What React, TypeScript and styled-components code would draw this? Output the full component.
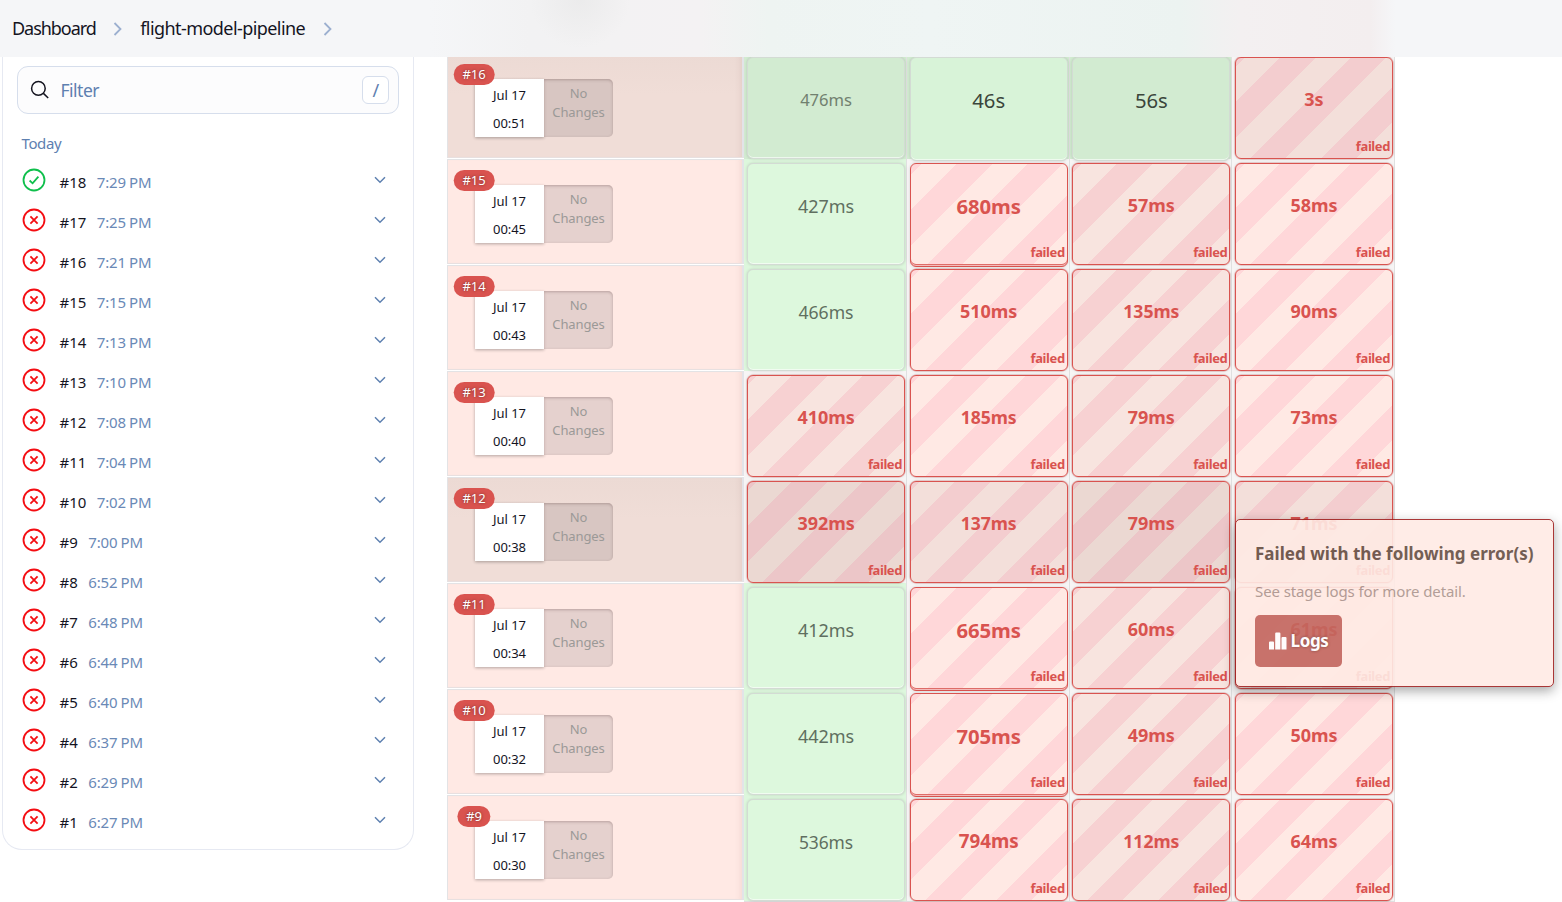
import React from 'react';
import styled, { createGlobalStyle, css } from 'styled-components';

const GlobalStyle = createGlobalStyle`
  * { box-sizing: border-box; }
  body { margin: 0; background: #fff; font-family: "Noto Sans", sans-serif; color: #14141f; overflow: hidden; }
`;

const Page = styled.div`
  height: 902px;
  width: 1562px;
  overflow: hidden;
  display: flex;
  flex-direction: column;
`;

const Header = styled.header`
  flex: none;
  height: 57px;
  display: flex;
  align-items: center;
  padding: 0 0 2px 12px;
  background:
    radial-gradient(ellipse 50px 48px at 580px 0, rgba(228, 228, 228, 0.5), rgba(238, 238, 238, 0)),
    linear-gradient(90deg, #f5f6f8 0, #f5f6f8 430px, #f2f2f3 530px, #f4f2f3 700px, #eef4f2 770px, #eff5f4 930px, #ecf3f1 1180px, #f3f0f1 1240px, #f3eeef 1370px, #f5f6f8 1395px);
`;

const Crumb = styled.span<{ $spacing: number }>`
  font-size: 18px;
  line-height: 24px;
  letter-spacing: ${p => p.$spacing}px;
  white-space: nowrap;
`;

const Separator = styled.svg`
  width: 10px;
  height: 16px;
  margin: 2px 17px 0 17.5px;
  fill: none;
  stroke: #9cb0d0;
  stroke-width: 1.8;
`;

const Content = styled.main`
  flex: 1;
  min-height: 0;
  overflow: hidden;
  display: flex;
  align-items: flex-start;
`;

const Sidebar = styled.aside`
  width: 412px;
  height: 793px;
  margin-left: 2px;
  padding: 9px 14px 0;
  border: 1px solid #e6e9f2;
  border-top: 0;
  border-radius: 0 0 20px 20px;
`;

const Search = styled.div`
  display: flex;
  align-items: center;
  height: 48px;
  padding: 0 9px 0 12px;
  border: 1px solid #d6deec;
  border-radius: 11px;
  background: #fcfcfd;
  color: #5e80b0;
  font-size: 17.5px;
  letter-spacing: -0.5px;
`;

const SearchIcon = styled.svg`
  width: 20px;
  height: 20px;
  margin-right: 10.5px;
  fill: none;
  stroke: #14141f;
  stroke-width: 1.5;
`;

const KeyHint = styled.span`
  display: flex;
  align-items: center;
  justify-content: center;
  width: 27px;
  height: 28px;
  margin-left: auto;
  border: 1px solid #d6deec;
  border-radius: 6px;
  background: #fff;
  font-size: 18px;
`;

const GroupTitle = styled.h2`
  margin: 17px 0 7px 4.5px;
  font-size: 15px;
  line-height: 24px;
  font-weight: 400;
  letter-spacing: -0.4px;
  color: #5e80b0;
`;

const RunRow = styled.div`
  display: flex;
  align-items: center;
  height: 40px;
  padding: 0 11px 0 5px;
  font-size: 15px;
  letter-spacing: -0.08px;
`;

const StatusIcon = styled.svg<{ $ok?: boolean }>`
  width: 24px;
  height: 24px;
  margin: -5px 13.5px 0 0;
  fill: none;
  stroke: ${p => (p.$ok ? '#0fbf4c' : '#f40d12')};
  stroke-width: 1.8;
`;

const RunTime = styled.span`
  margin-left: 10.5px;
  word-spacing: -1px;
  color: #6a89b6;
`;

const RowChevron = styled.svg`
  width: 12px;
  height: 8px;
  margin: -4px 2px 0 auto;
  fill: none;
  stroke: #5e80b0;
  stroke-width: 1.5;
`;

const Board = styled.section`
  position: relative;
  width: 948px;
  margin: -4px 0 0 33px;
`;

const BoardRow = styled.div`
  display: grid;
  grid-template-columns: 297.4px repeat(4, 162.66px);
  height: 106px;
`;

const BuildCell = styled.div<{ $dark?: boolean }>`
  height: 105px;
  padding: 21px 0 0 7px;
  border: 1px solid #e3e3e5;
  border-bottom-color: #e8e0e0;
  border-right: 2px solid #e3e3e8;
  background: ${p => (p.$dark ? 'linear-gradient(#ecdad4, #f0ddd7 40%)' : '#ffe9e4')};
  box-shadow: inset -6px 0 6px -5px rgba(120, 60, 50, 0.1);
`;

const Badge = styled.span`
  position: absolute;
  left: 27px;
  transform: translateX(-50%);
  margin-top: -11px;
  height: 21px;
  padding: 0 8.8px;
  border-radius: 11px;
  background: #d9534f;
  color: #fff;
  font-size: 13px;
  line-height: 21px;
  letter-spacing: -0.1px;
  text-shadow: 0 0 3px rgba(0, 0, 0, 0.5);
`;

const BuildInfo = styled.div`
  display: flex;
  margin: 4px 0 0 20px;
`;

const DateBox = styled.div`
  width: 69px;
  height: 58px;
  padding-top: 2px;
  background: #fff;
  text-align: center;
  font-size: 13px;
  line-height: 28px;
  letter-spacing: -0.05px;
  box-shadow: 0 1px 3px rgba(0, 0, 0, 0.3);
`;

const ChangesBox = styled.div<{ $dark?: boolean }>`
  width: 69px;
  height: 58px;
  padding-top: 5px;
  border-radius: 0 5px 5px 0;
  background: ${p => (p.$dark ? '#d8c6c2' : '#e5d1ce')};
  color: #9b9997;
  text-align: center;
  font-size: 13px;
  line-height: 19px;
  letter-spacing: -0.1px;
  box-shadow: inset 0 1px 3px rgba(80, 50, 50, 0.3);
`;

const StageCell = styled.div<{ $green?: boolean; $dark?: boolean }>`
  padding: 4px 1px 0 2.6px;
  border-right: 1px solid #e0e0e0;
  border-bottom: 1px solid #e0e0e0;
  background: ${p => (p.$green ? (p.$dark ? '#d2ebd1' : '#ddf7dd') : '#f7f5f5')};
`;

const stripes = (base: string, stripe: string) => css`
  background: repeating-linear-gradient(-45deg, ${base} 0, ${base} 25px, ${stripe} 25px, ${stripe} 50px);
`;

const tones = [
  stripes('#ffe9e4', '#ffd7d9'),
  stripes('#f8e4df', '#f7d1d2'),
  stripes('#f3dfda', '#f3cdcf'),
  stripes('#ebd8d2', '#ecc6c8'),
];
const greens = ['#ddf8dd', '#d8f3d8', '#d2ebd1'];

const Stage = styled.div<{ $fail?: boolean; $tone: number; $size: number; $tall?: boolean; $ink?: string }>`
  position: relative;
  height: ${p => (p.$tall ? 104 : 102)}px;
  padding-top: ${p => (p.$tall || (!p.$fail && p.$size > 17) ? 28 : 27)}px;
  border: 1px solid ${p => (p.$fail ? '#d9534f' : '#d3dbd4')};
  border-radius: 6px;
  text-align: center;
  line-height: 29px;
  font-size: ${p => p.$size}px;
  letter-spacing: -0.05px;
  font-weight: ${p => (p.$fail ? 700 : 400)};
  color: ${p => (p.$fail ? '#d9534f' : p.$ink)};
  ${p => (p.$fail ? tones[p.$tone] : css`background: ${greens[p.$tone]};`)}
  box-shadow: 0 0 3px rgba(0, 0, 0, 0.15)
    ${p => (!p.$fail ? ', inset 0 -1px 0 rgba(255, 255, 255, 0.6)' : p.$tall ? ', inset 0 -1px 0 #f4bcbb, inset 0 -2px 0 #de6c68' : ', 0 0 0 0.5px rgba(217, 83, 79, 0.4)')};
`;

const FailedLabel = styled.span<{ $tall?: boolean }>`
  position: absolute;
  right: 2px;
  bottom: ${p => (p.$tall ? 5 : 3)}px;
  font-size: 13px;
  line-height: 18px;
  letter-spacing: -0.4px;
`;

const Popover = styled.div`
  position: absolute;
  left: 788px;
  top: 466px;
  width: 319px;
  height: 168px;
  padding: 22px 19px;
  border: 1px solid #a02222;
  border-radius: 5px;
  background: #ffebe5;
  opacity: 0.9;
  box-shadow: 0 4px 12px rgba(0, 0, 0, 0.38);
`;

const PopTitle = styled.h3`
  margin: 0;
  font-size: 17px;
  line-height: 24px;
  letter-spacing: 0.04px;
  color: #664e43;
  white-space: nowrap;
`;

const PopText = styled.p`
  margin: 14px 0 13px;
  font-size: 15px;
  line-height: 22px;
  letter-spacing: -0.1px;
  color: #ab948d;
`;

const LogsButton = styled.button`
  display: flex;
  align-items: center;
  justify-content: center;
  gap: 4px;
  width: 87px;
  height: 52px;
  padding: 0 0 1px;
  border: 0;
  border-radius: 5px;
  background: #c3665e;
  color: #fff;
  font: 700 17px "Noto Sans", sans-serif;
  letter-spacing: -0.4px;
  text-shadow: 0 0 3px rgba(0, 0, 0, 0.45);
`;

const runs: [number, string][] = [
  [18, '7:29'], [17, '7:25'], [16, '7:21'], [15, '7:15'], [14, '7:13'], [13, '7:10'], [12, '7:08'], [11, '7:04'], [10, '7:02'],
  [9, '7:00'], [8, '6:52'], [7, '6:48'], [6, '6:44'], [5, '6:40'], [4, '6:37'], [2, '6:29'], [1, '6:27'],
];

interface StageData { t: string; fail?: boolean; tone: number; size: number; tall?: boolean; ink?: string }
const g = (t: string, tone = 0, size = 18, ink = '#5f6f60', tall = false): StageData => ({ t, tone, size, ink, tall });
const f = (t: string, tone = 0, size = 18, tall = false): StageData => ({ t, fail: true, tone, size, tall });

const builds: { n: number; time: string; dark?: boolean; stages: StageData[] }[] = [
  { n: 16, time: '00:51', dark: true, stages: [g('476ms', 2, 16.6, '#71806f'), g('46s', 1, 20.3, '#3b453b', true), g('56s', 2, 20.3, '#3b453b', true), f('3s', 2)] },
  { n: 15, time: '00:45', stages: [g('427ms'), f('680ms', 0, 20.3, true), f('57ms', 1), f('58ms')] },
  { n: 14, time: '00:43', stages: [g('466ms', 0, 17.6), f('510ms'), f('135ms', 1, 17.6), f('90ms')] },
  { n: 13, time: '00:40', stages: [f('410ms', 1), f('185ms', 0, 17.6), f('79ms', 1), f('73ms')] },
  { n: 12, time: '00:38', dark: true, stages: [f('392ms', 3), f('137ms', 2, 17.6), f('79ms', 3), f('71ms', 2)] },
  { n: 11, time: '00:34', stages: [g('412ms'), f('665ms', 0, 20.3, true), f('60ms', 1), f('61ms')] },
  { n: 10, time: '00:32', stages: [g('442ms'), f('705ms', 0, 20.3, true), f('49ms', 1), f('50ms')] },
  { n: 9, time: '00:30', stages: [g('536ms', 0, 17.4), f('794ms', 0, 18.8), f('112ms', 1, 17.6), f('64ms')] },
];

const Chevron = () => (
  <Separator viewBox="0 0 10 16"><path d="M1.5 2 L7.5 8 L1.5 14" /></Separator>
);

export default function App() {
  return (
    <Page>
      <GlobalStyle />
      <Header>
        <Crumb $spacing={-1.05}>Dashboard</Crumb>
        <Chevron />
        <Crumb $spacing={-0.57}>flight-model-pipeline</Crumb>
        <Chevron />
      </Header>
      <Content>
        <Sidebar>
          <Search>
            <SearchIcon viewBox="0 0 20 20"><circle cx="8.4" cy="8.4" r="6.8" /><path d="M13.4 13.4 L18.2 18" /></SearchIcon>
            Filter
            <KeyHint>/</KeyHint>
          </Search>
          <GroupTitle>Today</GroupTitle>
          {runs.map(([n, time]) => (
            <RunRow key={n}>
              <StatusIcon $ok={n === 18} viewBox="0 0 24 24">
                <circle cx="12" cy="12" r="10.5" />
                <path d={n === 18 ? 'M7.6 12.5 L10.6 15.3 L16.4 8.6' : 'M8.4 8.4 L15.6 15.6 M15.6 8.4 L8.4 15.6'} />
              </StatusIcon>
              <span>#{n}</span>
              <RunTime>{time} PM</RunTime>
              <RowChevron viewBox="0 0 12 8"><path d="M1 1.2 L6 6.2 L11 1.2" /></RowChevron>
            </RunRow>
          ))}
        </Sidebar>
        <Board>
          {builds.map(b => (
            <BoardRow key={b.n}>
              <BuildCell $dark={b.dark}>
                <Badge>#{b.n}</Badge>
                <BuildInfo>
                  <DateBox>Jul 17<br />{b.time}</DateBox>
                  <ChangesBox $dark={b.dark}>No<br />Changes</ChangesBox>
                </BuildInfo>
              </BuildCell>
              {b.stages.map((s, i) => (
                <StageCell key={i} $green={!s.fail} $dark={b.dark}>
                  <Stage $fail={s.fail} $tone={s.tone} $size={s.size} $tall={s.tall} $ink={s.ink}>
                    {s.t}
                    {s.fail && <FailedLabel $tall={s.tall}>failed</FailedLabel>}
                  </Stage>
                </StageCell>
              ))}
            </BoardRow>
          ))}
          <Popover>
            <PopTitle>Failed with the following error(s)</PopTitle>
            <PopText>See stage logs for more detail.</PopText>
            <LogsButton>
              <svg width="18" height="18" viewBox="0 0 18 18" fill="#fff"><path d="M0 10.500a1 1 0 0 1 1-1h3a1 1 0 0 1 1 1V17.500H0zM6.200 1.500a1 1 0 0 1 1-1h3.200a1 1 0 0 1 1 1V17.500H6.200zM12.500 6a1 1 0 0 1 1-1h3a1 1 0 0 1 1 1V17.500H12.500z" /></svg>
              Logs
            </LogsButton>
          </Popover>
        </Board>
      </Content>
    </Page>
  );
}
